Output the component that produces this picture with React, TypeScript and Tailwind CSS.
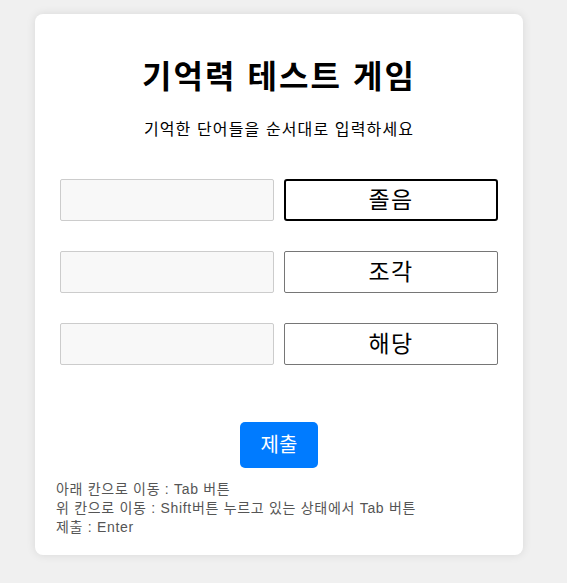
const WORDS = ['졸음', '조각', '해당']

export default function App() {
  return (
    <div className="min-h-[583px] bg-[#f0f0f0] pt-[14px] pl-[35px]" style={{ fontFamily: '"Liberation Sans", "Noto Sans CJK KR", sans-serif' }}>
      <div className="w-[488px] h-[541px] bg-white rounded-lg shadow-[0_0_10px_rgba(0,0,0,0.1)] pt-[43px] px-[21px] pb-[20px] flex flex-col">
        <h1 className="text-[32px] leading-[40px] font-bold text-black text-center tracking-[0.065em]">기억력 테스트 게임</h1>
        <p className="mt-[21px] text-[16px] leading-[24px] text-black text-center tracking-[0.07em]">기억한 단어들을 순서대로 입력하세요</p>

        <div className="mt-[37px] flex flex-col gap-[30px] items-center">
          {WORDS.map((w, i) => (
            <div key={w} className="flex gap-[10px]">
              <input
                className="w-[214px] h-[42px] bg-[#f8f8f8] border border-[#ccc] rounded-[2px] outline-none"
                readOnly
              />
              <div
                className={`w-[214px] h-[42px] flex items-center justify-center text-[23px] tracking-[0.06em] text-black bg-white ${
                  i === 0 ? 'border-2 border-black rounded-[3px]' : 'border border-[#767676] rounded-[2px]'
                }`}
              >
                {w}
              </div>
            </div>
          ))}
        </div>

        <div className="mt-[57px] flex justify-center">
          <button className="w-[78px] h-[46px] bg-[#007bff] text-white text-[20px] rounded-[5px]">제출</button>
        </div>

        <div className="mt-[12px] text-[14px] leading-[19px] text-[#555] tracking-[0.05em]">
          <p>아래 칸으로 이동 : Tab 버튼</p>
          <p>위 칸으로 이동 : Shift버튼 누르고 있는 상태에서 Tab 버튼</p>
          <p>제출 : Enter</p>
        </div>
      </div>
    </div>
  )
}
